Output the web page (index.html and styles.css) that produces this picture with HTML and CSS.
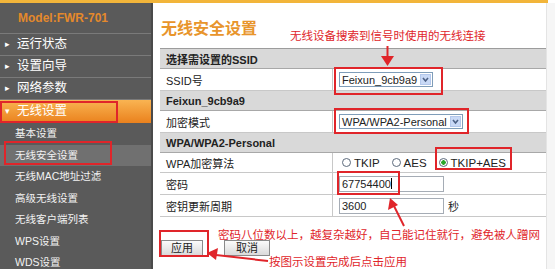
FILE: index.html
```html
<!doctype html>
<html lang="zh">
<head>
  <meta charset="utf-8">
  <title>无线安全设置</title>
  <link rel="stylesheet" href="styles.css">
</head>
<body>
  <div class="topbar"></div>
  <div class="page">
    <nav class="side">
      <div class="model">Model:FWR-701</div>
      <div class="item"><span class="tri">&#9656;</span>运行状态</div>
      <div class="item"><span class="tri">&#9656;</span>设置向导</div>
      <div class="item"><span class="tri">&#9656;</span>网络参数</div>
      <div class="item active"><span class="tri">&#9662;</span>无线设置</div>
      <div class="sub">基本设置</div>
      <div class="sub current">无线安全设置</div>
      <div class="sub">无线MAC地址过滤</div>
      <div class="sub">高级无线设置</div>
      <div class="sub">无线客户端列表</div>
      <div class="sub">WPS设置</div>
      <div class="sub">WDS设置</div>
    </nav>

    <main class="main">
      <div class="titlebar">
        <h1>无线安全设置</h1>
        <span class="note note-top">无线设备搜索到信号时使用的无线连接</span>
      </div>

      <table class="form">
        <tr class="head"><td colspan="2">选择需设置的SSID</td></tr>
        <tr>
          <td class="label">SSID号</td>
          <td><div class="select ssid"><span>Feixun_9cb9a9</span><i class="drop"></i></div></td>
        </tr>
        <tr class="head"><td colspan="2">Feixun_9cb9a9</td></tr>
        <tr>
          <td class="label">加密模式</td>
          <td><div class="select mode"><span>WPA/WPA2-Personal</span><i class="drop"></i></div></td>
        </tr>
        <tr class="head"><td colspan="2">WPA/WPA2-Personal</td></tr>
        <tr class="short">
          <td class="label">WPA加密算法</td>
          <td>
            <div class="radios">
              <label><i class="radio"></i>TKIP</label>
              <label><i class="radio"></i>AES</label>
              <label><i class="radio on"></i>TKIP+AES</label>
            </div>
          </td>
        </tr>
        <tr>
          <td class="label">密码</td>
          <td><div class="text">67754400<i class="caret"></i></div></td>
        </tr>
        <tr>
          <td class="label">密钥更新周期</td>
          <td><div class="text">3600</div><span class="unit">秒</span></td>
        </tr>
      </table>

      <p class="note note-pwd">密码八位数以上，越复杂越好，自己能记住就行，避免被人蹭网</p>

      <div class="actions">
        <button class="btn apply">应用</button>
        <button class="btn cancel">取消</button>
        <span class="note note-apply">按图示设置完成后点击应用</span>
      </div>
    </main>
    <div class="gutter"></div>
  </div>

  <!-- red annotation marks drawn over the screenshot -->
  <svg class="marks" width="555" height="269" viewBox="0 0 555 269">
    <g fill="none" stroke="#e0252a" stroke-width="2">
      <rect x="1" y="102" width="116" height="20"/>
      <rect x="5" y="142" width="106" height="22"/>
      <rect x="335" y="68" width="107" height="26"/>
      <rect x="335" y="109" width="133" height="24"/>
      <rect x="436" y="148" width="75" height="21"/>
      <rect x="338" y="172" width="61" height="22"/>
      <rect x="160" y="231" width="48" height="25"/>
      <line x1="387.5" y1="46" x2="387.5" y2="58"/>
      <line x1="404" y1="226" x2="394" y2="206"/>
      <line x1="268" y1="261" x2="216" y2="255"/>
    </g>
    <g fill="#e0252a">
      <polygon points="381,56 394,56 387.5,66"/>
      <polygon points="390,198 388,210 398,205"/>
      <polygon points="207,253 218,248 216,260"/>
    </g>
  </svg>
</body>
</html>
```

FILE: styles.css
```css
body {
    margin: 0;
    width: 555px;
    height: 269px;
    overflow: hidden;
    position: relative;
    background: #fff;
    font-family: "Liberation Sans", "Noto Sans CJK SC", sans-serif;
    font-size: 11px;
    color: #222;
}

.topbar {
    height: 3px;
    width: 548px;
    background: #f2b53a;
}

.page {
    display: flex;
    height: 266px;
}

/* left menu */
.side {
    width: 151px;
    flex: none;
    background: #5a5a5a;
    border-right: 2px solid #4a4a4a;
    color: #fff;
}

.model {
    height: 30px;
    line-height: 30px;
    padding-left: 18px;
    font-weight: bold;
    font-size: 12px;
    color: #e4892b;
    border-bottom: 1px solid #7a7a7a;
}

.item {
    height: 21px;
    line-height: 21px;
    padding-left: 5px;
    font-size: 12.5px;
    border-bottom: 1px solid #7a7a7a;
}

.item .tri {
    display: inline-block;
    width: 12px;
    font-size: 9px;
    vertical-align: 1px;
}

.item.active {
    height: 23px;
    line-height: 23px;
    background: linear-gradient(#f9b452, #ea811d);
    border-bottom: 0;
}

.sub {
    height: 21.5px;
    line-height: 21.5px;
    padding-left: 15px;
    font-size: 10.5px;
    color: #f2f2f2;
}

.sub.current {
    background: #707070;
}

/* content */
.main {
    width: 386px;
    padding-left: 7px;
    flex: none;
}

.gutter {
    flex: 1;
    background: #f6f6f6;
    border-left: 1px solid #e4e4e4;
}

.titlebar {
    display: flex;
    align-items: flex-start;
    height: 45px;
}

h1 {
    margin: 17px 0 0 1px;
    font-size: 16px;
    line-height: 18px;
    font-weight: bold;
    color: #e8952c;
}

.note {
    color: #e0252a;
    font-size: 11.5px;
    line-height: 14px;
}

.note-top {
    margin: 26px 0 0 33px;
}

.form {
    width: 386px;
    border-collapse: collapse;
}

.form td {
    padding: 0 0 0 6px;
    height: 21px;
    border-bottom: 1px solid #c8c8c8;
}

.form tr.head td {
    height: 19px;
    background: #d9d9d9;
    border-top: 1px solid #9c9c9c;
    border-bottom: 1px solid #a8a8a8;
    font-weight: bold;
    font-size: 11px;
}

.form tr.short td {
    height: 19px;
}

.form td.label {
    width: 166px;
    border-right: 1px solid #c8c8c8;
    font-size: 11px;
}

.select {
    display: inline-flex;
    align-items: center;
    height: 13px;
    border: 1px solid #7f9db9;
    padding-left: 2px;
    font-size: 11px;
    vertical-align: middle;
}

.select.ssid {
    width: 90px;
}

.select.mode {
    width: 120px;
}

.select span {
    flex: 1;
}

.drop {
    width: 11px;
    height: 11px;
    margin-right: 1px;
    border: 1px solid #b4c8ec;
    background: #c9d9f6 url("data:image/svg+xml,%3Csvg xmlns='http://www.w3.org/2000/svg' width='11' height='11'%3E%3Cpath d='M3 4l2.5 3L8 4' fill='none' stroke='%234d6185' stroke-width='1.6'/%3E%3C/svg%3E") center no-repeat;
    box-sizing: border-box;
}

.radios {
    display: flex;
    gap: 12px;
    padding-left: 3px;
    font-size: 11.5px;
}

.radios label {
    display: flex;
    align-items: center;
    gap: 3px;
}

.radio {
    width: 9px;
    height: 9px;
    border: 1px solid #5c6a7c;
    border-radius: 50%;
    box-sizing: border-box;
    background: #fff;
}

.radio.on {
    background: radial-gradient(circle, #2aa52a 0 2px, #fff 2.5px);
}

.text {
    display: inline-block;
    width: 101px;
    height: 14px;
    line-height: 14px;
    padding-left: 2px;
    border: 1px solid #a5acb5;
    font-size: 11px;
    vertical-align: middle;
}

.caret {
    display: inline-block;
    width: 1px;
    height: 11px;
    background: #000;
    vertical-align: -1px;
}

.unit {
    margin-left: 4px;
    font-size: 11px;
    vertical-align: middle;
}

.note-pwd {
    margin: 11px 0 0 58px;
}

.actions {
    display: flex;
    align-items: flex-start;
    margin-top: -2px;
}

.btn {
    flex: none;
    height: 16px;
    padding: 0;
    border: 1px solid #8a8a8a;
    background: linear-gradient(#fbfbfb, #dadada);
    font-family: inherit;
    font-size: 11px;
    line-height: 14px;
    color: #222;
}

.btn.apply {
    width: 42px;
    margin-left: 1px;
}

.btn.cancel {
    width: 46px;
    margin-left: 21px;
}

.note-apply {
    flex: none;
    margin: 15px 0 0 -1px;
}

.marks {
    position: absolute;
    left: 0;
    top: 0;
}
```
